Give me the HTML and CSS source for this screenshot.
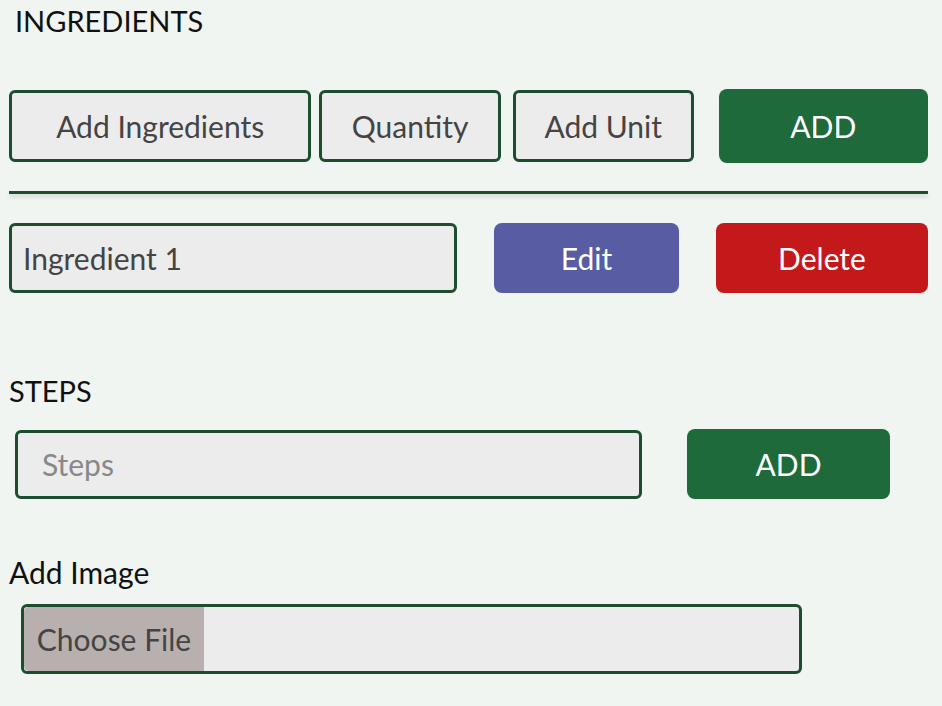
FILE: index.html
```html
<!DOCTYPE html>
<html>
<head>
<meta charset="utf-8">
<link rel="stylesheet" href="styles.css">
</head>
<body>
<div class="page">
  <h2 class="title">INGREDIENTS</h2>
  <div class="row row-add">
    <div class="field f-ing">Add Ingredients</div>
    <div class="field f-qty">Quantity</div>
    <div class="field f-unit">Add Unit</div>
    <button class="btn btn-green b-add1">ADD</button>
  </div>
  <div class="sep"></div>
  <div class="row row-item">
    <div class="field f-item">Ingredient 1</div>
    <button class="btn btn-edit">Edit</button>
    <button class="btn btn-del">Delete</button>
  </div>
  <h2 class="label steps-label">STEPS</h2>
  <div class="row row-steps">
    <div class="field f-steps">Steps</div>
    <button class="btn btn-green b-add2">ADD</button>
  </div>
  <h2 class="label img-label">Add Image</h2>
  <div class="file">
    <span class="file-btn">Choose File</span>
  </div>
</div>
</body>
</html>
```
FILE: styles.css
```css
html, body {
  margin: 0;
  padding: 0;
  background: #f0f5f1;
  font-family: Lato, "Noto Sans", sans-serif;
}
.page {
  padding: 0 0 0 9px;
  width: 919px;
}
.title {
  margin: 0;
  padding: 3px 0 0 6px;
  height: 89px;
  box-sizing: border-box;
  font-size: 29px;
  font-weight: 400;
  color: #111;
}
.row {
  display: flex;
  align-items: center;
}
.field {
  box-sizing: border-box;
  border: 3px solid #1b4d2e;
  border-radius: 6px;
  background: #ececec;
  color: #444;
  font-size: 30px;
  display: flex;
  align-items: center;
}
.btn {
  box-sizing: border-box;
  border: none;
  border-radius: 8px;
  color: #fff;
  font-family: inherit;
  font-size: 30px;
  padding: 0;
}
.row-add .field {
  height: 72px;
  justify-content: center;
}
.f-ing { width: 303px; }
.f-qty { width: 182px; margin-left: 8px; }
.f-unit { width: 181px; margin-left: 12px; }
.btn-green { background: #1e6a3b; }
.b-add1 { width: 210px; height: 74px; margin-left: 25px; }
.sep {
  height: 3px;
  background: #1b4d2e;
  margin-top: 28px;
  box-shadow: 0 3px 4px rgba(0,0,0,0.14);
}
.row-item { margin-top: 29px; }
.f-item {
  width: 448px;
  height: 70px;
  padding-left: 11px;
}
.btn-edit { background: #585ca3; width: 185px; height: 70px; margin-left: 37px; }
.btn-del { background: #c4191b; width: 212px; height: 70px; margin-left: 37px; }
.label {
  margin: 0;
  font-size: 29px;
  font-weight: 400;
  color: #111;
}
.steps-label { margin-top: 80px; height: 56px; }
.row-steps { padding-left: 6px; }
.f-steps {
  width: 627px;
  height: 69px;
  padding-left: 24px;
  color: #888;
}
.b-add2 { width: 203px; height: 70px; margin-left: 45px; }
.img-label { margin-top: 55px; height: 50px; font-size: 30px; }
.file {
  box-sizing: border-box;
  margin-left: 12px;
  width: 781px;
  height: 70px;
  border: 3px solid #1b4d2e;
  border-radius: 6px;
  background: #ececec;
  display: flex;
}
.file-btn {
  width: 180px;
  background: #b8b0ae;
  border-radius: 5px 0 0 5px;
  color: #444;
  font-size: 30px;
  display: flex;
  align-items: center;
  justify-content: center;
}
```
